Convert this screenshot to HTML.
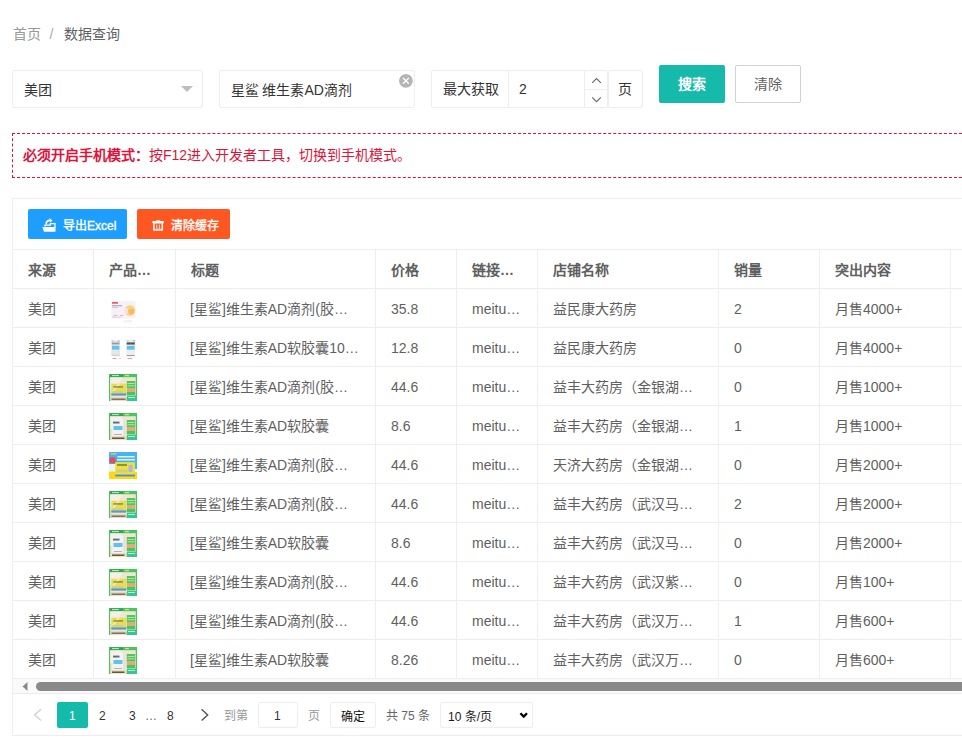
<!DOCTYPE html>
<html lang="zh-CN"><head><meta charset="utf-8">
<style>
*{box-sizing:border-box;margin:0;padding:0}
html,body{width:962px;height:737px;overflow:hidden;background:#fff}
body{font-family:"Liberation Sans",sans-serif;font-size:14px;color:#606266;position:relative}
.abs{position:absolute}
.bc{left:13px;top:24px;line-height:20px;font-size:14px}
.bc .a{color:#999}
.bc .s{color:#aaa;margin:0 10.5px 0 8.5px}
.bc .b{color:#606266}
.box{position:absolute;border:1px solid #eee;border-radius:2px;background:#fff}
.txt{position:absolute;line-height:20px;white-space:nowrap}
.btn{position:absolute;border-radius:2px;text-align:center;white-space:nowrap}
.alert{left:12px;top:133px;width:980px;height:45px;border:1px dashed #dc143c}
.alert span{position:absolute;left:10px;top:11px;line-height:20px;font-size:14px;color:#dc143c}
.card{left:12px;top:198px;width:990px;height:538px;border:1px solid #eee;background:#fff}
.tb{position:absolute;left:0;top:50px;border-collapse:collapse;table-layout:fixed}
.tb td,.tb th{border:1px solid #eee;height:39px;padding:0 15px;text-align:left;white-space:nowrap;overflow:hidden;font-size:14px;color:#5f5f5f}
.tb th{font-weight:bold;color:#5f5f5f}

.tb td{position:relative}
.tb td.n{padding-top:2px}
.tb td.t{text-indent:-1px}
.im{position:absolute;left:15px;top:7px;width:28px;height:28px;display:block}
.scr{position:absolute;left:0;top:480px;width:990px;height:15px;background:#fafafa;border-bottom:1px solid #ececec}
.pg{position:absolute;line-height:20px;font-size:12px;white-space:nowrap}
</style></head><body>
<div class="abs bc"><span class="a">首页</span><span class="s">/</span><span class="b">数据查询</span></div>

<!-- select -->
<div class="box" style="left:12px;top:70px;width:191px;height:38px"></div>
<div class="txt" style="left:23.5px;top:80px;color:#333">美团</div>
<svg class="abs" style="left:181px;top:86px" width="12" height="7"><path d="M0 0H12L6 6Z" fill="#bdbdbd"/></svg>

<!-- input -->
<div class="box" style="left:219px;top:70px;width:196px;height:38px"></div>
<div class="txt" style="left:230.5px;top:80px;color:#333">星鲨 维生素AD滴剂</div>
<svg class="abs" style="left:398px;top:73px" width="16" height="16"><circle cx="7.9" cy="7.85" r="6.9" fill="#b4b4b4"/><path d="M5 4.95L10.8 10.75M10.8 4.95L5 10.75" stroke="#fff" stroke-width="1.3"/></svg>

<!-- max -->
<div class="box" style="left:431px;top:70px;width:78px;height:38px;border-radius:2px 0 0 2px"></div>
<div class="txt" style="left:443px;top:79px;color:#333">最大获取</div>
<div class="box" style="left:508px;top:70px;width:100px;height:38px;border-radius:2px"></div>
<div class="txt" style="left:519px;top:79px;color:#333">2</div>
<div class="abs" style="left:584px;top:71px;width:1px;height:36px;background:#eee"></div>
<div class="abs" style="left:585px;top:89px;width:22px;height:1px;background:#eee"></div>
<svg class="abs" style="left:591px;top:77px" width="12" height="8" viewBox="0 0 12 8"><path d="M1.2 5.9L5.5 1.6L9.8 5.9" fill="none" stroke="#666" stroke-width="1.1"/></svg>
<svg class="abs" style="left:591px;top:96px" width="12" height="8" viewBox="0 0 12 8"><path d="M1.2 1.3L5.5 5.6L9.8 1.3" fill="none" stroke="#666" stroke-width="1.1"/></svg>
<div class="box" style="left:608px;top:70px;width:35px;height:38px;border-radius:2px"></div>
<div class="txt" style="left:618px;top:79px;color:#333">页</div>

<div class="btn" style="left:659px;top:65px;width:66px;height:38px;background:#16baaa;color:#fff;font-weight:bold;line-height:38px">搜索</div>
<div class="btn" style="left:735px;top:65px;width:66px;height:38px;border:1px solid #d2d2d2;color:#5f5f5f;line-height:36px">清除</div>

<div class="abs alert"><span><b>必须开启手机模式：</b>按F12进入开发者工具，切换到手机模式。</span></div>

<div class="abs card">
  <div class="btn" style="left:15px;top:10px;width:99px;height:30px;background:#1e9fff"></div>
  <svg class="abs" style="left:29px;top:18px" width="15" height="16" viewBox="0 0 15 16"><path d="M0.4 10 L13.6 10 L13.4 14.8 L2 14.8 Z" fill="#fff"/><path d="M3 9.5 V8.2 H8.3 V6.6 H13 V10" fill="none" stroke="#fff" stroke-width="1.3"/><path d="M4.2 7.2 C4.2 4.6 5.6 3.4 8 3.4" fill="none" stroke="#fff" stroke-width="1.6"/><path d="M7.4 0.9 L10.4 3.6 L8.4 5.8 Z" fill="#fff"/></svg>
  <div class="txt" style="left:50px;top:17px;color:#fff;font-size:12px;-webkit-text-stroke:0.35px #fff">导出Excel</div>
  <div class="btn" style="left:124px;top:10px;width:93px;height:30px;background:#ff5722"></div>
  <svg class="abs" style="left:139px;top:20.6px" width="13" height="12" viewBox="0 0 13 12"><rect x="0.2" y="1" width="11.8" height="2.4" rx="1.1" fill="#fff"/><rect x="4.2" y="0.2" width="4" height="1" fill="#ffd9c9"/><path d="M1.9 3 V10.1 H10.3 V3" fill="none" stroke="#fff" stroke-width="1.5"/><path d="M4.8 4.6 V8.6 M7.4 4.6 V8.6" stroke="#ffe2d6" stroke-width="1"/><path d="M3.2 8.9 H9" stroke="#ffd2bf" stroke-width="0.6"/></svg>
  <div class="txt" style="left:158px;top:17px;color:#fff;font-size:12px;-webkit-text-stroke:0.35px #fff">清除缓存</div>
  <table class="tb" style="left:-1px;width:1038px">
    <colgroup><col style="width:81px"><col style="width:82px"><col style="width:200px"><col style="width:81px"><col style="width:81px"><col style="width:181px"><col style="width:101px"><col style="width:131px"><col style="width:100px"></colgroup>
    <tr><th>来源</th><th>产品…</th><th>标题</th><th>价格</th><th>链接…</th><th>店铺名称</th><th>销量</th><th>突出内容</th><th></th></tr>
    <tr><td>美团</td><td><svg class="im" viewBox="0 0 28 28"><rect x="2.3" y="5" width="24.2" height="17.4" fill="#f5f1f7"/><rect x="3" y="6" width="6" height="1.7" fill="#ec5a6c"/><rect x="3" y="9.2" width="10" height="1.1" fill="#a89fb6"/><rect x="3" y="11.2" width="6" height="0.8" fill="#c9c1d2"/><circle cx="21" cy="14.5" r="5.2" fill="#f8d27c"/><circle cx="22.3" cy="15.6" r="2.8" fill="#f5bb6a"/><path d="M16 12 L19 12.5 L19 18 L15.5 17.5 Z" fill="#f3e3e0"/><rect x="4.5" y="19" width="4" height="0.8" fill="#eea0ae"/><rect x="11" y="19" width="3.5" height="0.8" fill="#eea0ae"/><rect x="3" y="20.8" width="9" height="0.6" fill="#c0bbc8"/><rect x="14.5" y="24" width="8.5" height="2.6" fill="#f4f4f4"/></svg></td><td class="t">[星鲨]维生素AD滴剂(胶…</td><td class="n">35.8</td><td class="n">meitu…</td><td>益民康大药房</td><td class="n">2</td><td>月售4000+</td><td></td></tr>
    <tr><td>美团</td><td><svg class="im" viewBox="0 0 28 28"><rect x="2.3" y="5.3" width="8.7" height="16" fill="#e6e6e6"/><rect x="2.6" y="5.6" width="2" height="1" fill="#8ccbe8"/><rect x="8.6" y="5.6" width="2" height="1" fill="#7bbfa5"/><rect x="2.8" y="7.6" width="7.7" height="1.8" fill="#9a9a9a"/><rect x="3" y="10.8" width="7.3" height="3.8" fill="#62c2ee"/><rect x="2.8" y="19.8" width="7.7" height="0.8" fill="#bfc8ce"/><rect x="17.3" y="5" width="8.9" height="16.6" fill="#eeeeee"/><rect x="17.6" y="5.3" width="2" height="1" fill="#8ccbe8"/><rect x="23.8" y="5.3" width="2" height="1" fill="#6cc59b"/><rect x="17.6" y="7.4" width="8.3" height="2.2" fill="#555"/><rect x="17.9" y="10.9" width="7.7" height="3.8" fill="#5cc3ef"/><rect x="17.8" y="20" width="7.9" height="0.8" fill="#888"/><rect x="3.5" y="23" width="4" height="0.8" fill="#f27f8d"/><rect x="10" y="23" width="2" height="0.7" fill="#f6b3bb"/><rect x="18.5" y="23" width="4.5" height="0.8" fill="#f27f8d"/></svg></td><td class="t">[星鲨]维生素AD软胶囊10…</td><td class="n">12.8</td><td class="n">meitu…</td><td>益民康大药房</td><td class="n">0</td><td>月售4000+</td><td></td></tr>
    <tr><td>美团</td><td><svg class="im" viewBox="0 0 28 28"><rect x="0" y="0" width="28" height="27" fill="#45c660"/><rect x="1.2" y="3.2" width="25.6" height="20.5" fill="#efe4d6"/><path d="M1.2 3.2 H14 L6 16 H1.2 Z" fill="#f6efe7"/><rect x="1.2" y="23.3" width="16.5" height="3.7" fill="#eadcc2"/><rect x="2.5" y="24.5" width="14" height="1.4" fill="#776850"/><rect x="2.3" y="9.8" width="14.9" height="11.8" rx="0.8" fill="#e4df50"/><path d="M2.3 18 L9 9.8 H11 L3.5 19 Z" fill="#f1eeb8"/><rect x="4.5" y="12.4" width="9.5" height="1.1" fill="#6e6c40"/><rect x="3" y="17" width="11" height="2" fill="#d2cf86"/><rect x="2.3" y="19.4" width="14.9" height="2.2" fill="#5a98dc"/><rect x="17.8" y="7" width="8.4" height="7.6" fill="#55c656"/><rect x="18.5" y="9" width="7" height="0.7" fill="#d4f1cc"/><rect x="18.5" y="11.5" width="7" height="0.7" fill="#d4f1cc"/><rect x="17.8" y="14.6" width="8.4" height="3.1" fill="#f4a07a"/><rect x="17.8" y="17.7" width="8.4" height="3.3" fill="#4ec454"/><rect x="18" y="21.5" width="9.5" height="5.5" fill="#36c693"/><rect x="19" y="23" width="7" height="0.8" fill="#dcf5ea"/><rect x="1" y="0.3" width="13" height="2.8" fill="#2aa84a"/><rect x="3" y="1.2" width="7" height="0.9" fill="#d8f1dc"/><rect x="16" y="1" width="4" height="1.2" fill="#dce36a"/></svg></td><td class="t">[星鲨]维生素AD滴剂(胶…</td><td class="n">44.6</td><td class="n">meitu…</td><td>益丰大药房（金银湖…</td><td class="n">0</td><td>月售1000+</td><td></td></tr>
    <tr><td>美团</td><td><svg class="im" viewBox="0 0 28 28"><rect x="0" y="0" width="28" height="27" fill="#45c660"/><rect x="1.2" y="3.2" width="25.6" height="20.5" fill="#efe4d6"/><path d="M1.2 3.2 H14 L6 16 H1.2 Z" fill="#f6efe7"/><rect x="1.2" y="23.3" width="16.5" height="3.7" fill="#f5e2b8"/><rect x="3" y="24.5" width="12.5" height="1.4" fill="#55493a"/><rect x="3.5" y="6" width="11" height="17" fill="#f2f3f5"/><rect x="14.5" y="7" width="1" height="16" fill="#dcdcdf"/><rect x="4" y="8.6" width="6.5" height="1.9" fill="#6a6a6a"/><rect x="4.5" y="13" width="9" height="4" fill="#62c2ef"/><rect x="5" y="21" width="8" height="0.7" fill="#999"/><rect x="17.8" y="7" width="8.4" height="7.6" fill="#55c656"/><rect x="18.5" y="9" width="7" height="0.7" fill="#d4f1cc"/><rect x="18.5" y="11.5" width="7" height="0.7" fill="#d4f1cc"/><rect x="17.8" y="14.6" width="8.4" height="3.1" fill="#f4a07a"/><rect x="17.8" y="17.7" width="8.4" height="3.3" fill="#4ec454"/><rect x="18" y="21.5" width="9.5" height="5.5" fill="#36c693"/><rect x="19" y="23" width="7" height="0.8" fill="#dcf5ea"/><rect x="1" y="0.3" width="13" height="2.8" fill="#2aa84a"/><rect x="3" y="1.2" width="7" height="0.9" fill="#d8f1dc"/><rect x="16" y="1" width="4" height="1.2" fill="#dce36a"/></svg></td><td class="t">[星鲨]维生素AD软胶囊</td><td class="n">8.6</td><td class="n">meitu…</td><td>益丰大药房（金银湖…</td><td class="n">1</td><td>月售1000+</td><td></td></tr>
    <tr><td>美团</td><td><svg class="im" viewBox="0 0 28 28"><rect x="0" y="0" width="28" height="19.5" fill="#48b4ee"/><rect x="0" y="19" width="28" height="8" fill="#fbd90a"/><path d="M0 12 H8 V19.5 H0 Z" fill="#eaf5fb"/><path d="M24 17 H28 V20 H24 Z" fill="#f2f7fb"/><rect x="1.5" y="1.2" width="6" height="1.2" fill="#f3c950"/><rect x="8.5" y="4" width="17" height="1.5" fill="#e4f2fb"/><rect x="8" y="7" width="18" height="1.5" fill="#e4f2fb"/><circle cx="3.6" cy="8.2" r="3.2" fill="#ec4a5a"/><rect x="6.2" y="10.2" width="19.8" height="14.2" fill="#e8e23e"/><rect x="8" y="12.4" width="10" height="1.2" fill="#5a5a3a"/><rect x="19.5" y="13" width="4" height="7" fill="#bbaedb"/><rect x="7.5" y="17.5" width="11" height="3" fill="#d4cc84"/><rect x="6.2" y="22.6" width="19.8" height="1.8" fill="#4a8ad4"/></svg></td><td class="t">[星鲨]维生素AD滴剂(胶…</td><td class="n">44.6</td><td class="n">meitu…</td><td>天济大药房（金银湖…</td><td class="n">0</td><td>月售2000+</td><td></td></tr>
    <tr><td>美团</td><td><svg class="im" viewBox="0 0 28 28"><rect x="0" y="0" width="28" height="27" fill="#45c660"/><rect x="1.2" y="3.2" width="25.6" height="20.5" fill="#efe4d6"/><path d="M1.2 3.2 H14 L6 16 H1.2 Z" fill="#f6efe7"/><rect x="1.2" y="23.3" width="16.5" height="3.7" fill="#eadcc2"/><rect x="2.5" y="24.5" width="14" height="1.4" fill="#776850"/><rect x="2.3" y="9.8" width="14.9" height="11.8" rx="0.8" fill="#e4df50"/><path d="M2.3 18 L9 9.8 H11 L3.5 19 Z" fill="#f1eeb8"/><rect x="4.5" y="12.4" width="9.5" height="1.1" fill="#6e6c40"/><rect x="3" y="17" width="11" height="2" fill="#d2cf86"/><rect x="2.3" y="19.4" width="14.9" height="2.2" fill="#5a98dc"/><rect x="17.8" y="7" width="8.4" height="7.6" fill="#55c656"/><rect x="18.5" y="9" width="7" height="0.7" fill="#d4f1cc"/><rect x="18.5" y="11.5" width="7" height="0.7" fill="#d4f1cc"/><rect x="17.8" y="14.6" width="8.4" height="3.1" fill="#f4a07a"/><rect x="17.8" y="17.7" width="8.4" height="3.3" fill="#4ec454"/><rect x="18" y="21.5" width="9.5" height="5.5" fill="#36c693"/><rect x="19" y="23" width="7" height="0.8" fill="#dcf5ea"/><rect x="1" y="0.3" width="13" height="2.8" fill="#2aa84a"/><rect x="3" y="1.2" width="7" height="0.9" fill="#d8f1dc"/><rect x="16" y="1" width="4" height="1.2" fill="#dce36a"/></svg></td><td class="t">[星鲨]维生素AD滴剂(胶…</td><td class="n">44.6</td><td class="n">meitu…</td><td>益丰大药房（武汉马…</td><td class="n">2</td><td>月售2000+</td><td></td></tr>
    <tr><td>美团</td><td><svg class="im" viewBox="0 0 28 28"><rect x="0" y="0" width="28" height="27" fill="#45c660"/><rect x="1.2" y="3.2" width="25.6" height="20.5" fill="#efe4d6"/><path d="M1.2 3.2 H14 L6 16 H1.2 Z" fill="#f6efe7"/><rect x="1.2" y="23.3" width="16.5" height="3.7" fill="#f5e2b8"/><rect x="3" y="24.5" width="12.5" height="1.4" fill="#55493a"/><rect x="3.5" y="6" width="11" height="17" fill="#f2f3f5"/><rect x="14.5" y="7" width="1" height="16" fill="#dcdcdf"/><rect x="4" y="8.6" width="6.5" height="1.9" fill="#6a6a6a"/><rect x="4.5" y="13" width="9" height="4" fill="#62c2ef"/><rect x="5" y="21" width="8" height="0.7" fill="#999"/><rect x="17.8" y="7" width="8.4" height="7.6" fill="#55c656"/><rect x="18.5" y="9" width="7" height="0.7" fill="#d4f1cc"/><rect x="18.5" y="11.5" width="7" height="0.7" fill="#d4f1cc"/><rect x="17.8" y="14.6" width="8.4" height="3.1" fill="#f4a07a"/><rect x="17.8" y="17.7" width="8.4" height="3.3" fill="#4ec454"/><rect x="18" y="21.5" width="9.5" height="5.5" fill="#36c693"/><rect x="19" y="23" width="7" height="0.8" fill="#dcf5ea"/><rect x="1" y="0.3" width="13" height="2.8" fill="#2aa84a"/><rect x="3" y="1.2" width="7" height="0.9" fill="#d8f1dc"/><rect x="16" y="1" width="4" height="1.2" fill="#dce36a"/></svg></td><td class="t">[星鲨]维生素AD软胶囊</td><td class="n">8.6</td><td class="n">meitu…</td><td>益丰大药房（武汉马…</td><td class="n">0</td><td>月售2000+</td><td></td></tr>
    <tr><td>美团</td><td><svg class="im" viewBox="0 0 28 28"><rect x="0" y="0" width="28" height="27" fill="#45c660"/><rect x="1.2" y="3.2" width="25.6" height="20.5" fill="#efe4d6"/><path d="M1.2 3.2 H14 L6 16 H1.2 Z" fill="#f6efe7"/><rect x="1.2" y="23.3" width="16.5" height="3.7" fill="#eadcc2"/><rect x="2.5" y="24.5" width="14" height="1.4" fill="#776850"/><rect x="2.3" y="9.8" width="14.9" height="11.8" rx="0.8" fill="#e4df50"/><path d="M2.3 18 L9 9.8 H11 L3.5 19 Z" fill="#f1eeb8"/><rect x="4.5" y="12.4" width="9.5" height="1.1" fill="#6e6c40"/><rect x="3" y="17" width="11" height="2" fill="#d2cf86"/><rect x="2.3" y="19.4" width="14.9" height="2.2" fill="#5a98dc"/><rect x="17.8" y="7" width="8.4" height="7.6" fill="#55c656"/><rect x="18.5" y="9" width="7" height="0.7" fill="#d4f1cc"/><rect x="18.5" y="11.5" width="7" height="0.7" fill="#d4f1cc"/><rect x="17.8" y="14.6" width="8.4" height="3.1" fill="#f4a07a"/><rect x="17.8" y="17.7" width="8.4" height="3.3" fill="#4ec454"/><rect x="18" y="21.5" width="9.5" height="5.5" fill="#36c693"/><rect x="19" y="23" width="7" height="0.8" fill="#dcf5ea"/><rect x="1" y="0.3" width="13" height="2.8" fill="#2aa84a"/><rect x="3" y="1.2" width="7" height="0.9" fill="#d8f1dc"/><rect x="16" y="1" width="4" height="1.2" fill="#dce36a"/></svg></td><td class="t">[星鲨]维生素AD滴剂(胶…</td><td class="n">44.6</td><td class="n">meitu…</td><td>益丰大药房（武汉紫…</td><td class="n">0</td><td>月售100+</td><td></td></tr>
    <tr><td>美团</td><td><svg class="im" viewBox="0 0 28 28"><rect x="0" y="0" width="28" height="27" fill="#45c660"/><rect x="1.2" y="3.2" width="25.6" height="20.5" fill="#efe4d6"/><path d="M1.2 3.2 H14 L6 16 H1.2 Z" fill="#f6efe7"/><rect x="1.2" y="23.3" width="16.5" height="3.7" fill="#eadcc2"/><rect x="2.5" y="24.5" width="14" height="1.4" fill="#776850"/><rect x="2.3" y="9.8" width="14.9" height="11.8" rx="0.8" fill="#e4df50"/><path d="M2.3 18 L9 9.8 H11 L3.5 19 Z" fill="#f1eeb8"/><rect x="4.5" y="12.4" width="9.5" height="1.1" fill="#6e6c40"/><rect x="3" y="17" width="11" height="2" fill="#d2cf86"/><rect x="2.3" y="19.4" width="14.9" height="2.2" fill="#5a98dc"/><rect x="17.8" y="7" width="8.4" height="7.6" fill="#55c656"/><rect x="18.5" y="9" width="7" height="0.7" fill="#d4f1cc"/><rect x="18.5" y="11.5" width="7" height="0.7" fill="#d4f1cc"/><rect x="17.8" y="14.6" width="8.4" height="3.1" fill="#f4a07a"/><rect x="17.8" y="17.7" width="8.4" height="3.3" fill="#4ec454"/><rect x="18" y="21.5" width="9.5" height="5.5" fill="#36c693"/><rect x="19" y="23" width="7" height="0.8" fill="#dcf5ea"/><rect x="1" y="0.3" width="13" height="2.8" fill="#2aa84a"/><rect x="3" y="1.2" width="7" height="0.9" fill="#d8f1dc"/><rect x="16" y="1" width="4" height="1.2" fill="#dce36a"/></svg></td><td class="t">[星鲨]维生素AD滴剂(胶…</td><td class="n">44.6</td><td class="n">meitu…</td><td>益丰大药房（武汉万…</td><td class="n">1</td><td>月售600+</td><td></td></tr>
    <tr><td>美团</td><td><svg class="im" viewBox="0 0 28 28"><rect x="0" y="0" width="28" height="27" fill="#45c660"/><rect x="1.2" y="3.2" width="25.6" height="20.5" fill="#efe4d6"/><path d="M1.2 3.2 H14 L6 16 H1.2 Z" fill="#f6efe7"/><rect x="1.2" y="23.3" width="16.5" height="3.7" fill="#f5e2b8"/><rect x="3" y="24.5" width="12.5" height="1.4" fill="#55493a"/><rect x="3.5" y="6" width="11" height="17" fill="#f2f3f5"/><rect x="14.5" y="7" width="1" height="16" fill="#dcdcdf"/><rect x="4" y="8.6" width="6.5" height="1.9" fill="#6a6a6a"/><rect x="4.5" y="13" width="9" height="4" fill="#62c2ef"/><rect x="5" y="21" width="8" height="0.7" fill="#999"/><rect x="17.8" y="7" width="8.4" height="7.6" fill="#55c656"/><rect x="18.5" y="9" width="7" height="0.7" fill="#d4f1cc"/><rect x="18.5" y="11.5" width="7" height="0.7" fill="#d4f1cc"/><rect x="17.8" y="14.6" width="8.4" height="3.1" fill="#f4a07a"/><rect x="17.8" y="17.7" width="8.4" height="3.3" fill="#4ec454"/><rect x="18" y="21.5" width="9.5" height="5.5" fill="#36c693"/><rect x="19" y="23" width="7" height="0.8" fill="#dcf5ea"/><rect x="1" y="0.3" width="13" height="2.8" fill="#2aa84a"/><rect x="3" y="1.2" width="7" height="0.9" fill="#d8f1dc"/><rect x="16" y="1" width="4" height="1.2" fill="#dce36a"/></svg></td><td class="t">[星鲨]维生素AD软胶囊</td><td class="n">8.26</td><td class="n">meitu…</td><td>益丰大药房（武汉万…</td><td class="n">0</td><td>月售600+</td><td></td></tr>
  </table>

  <div class="scr"></div>
  <svg class="abs" style="left:9px;top:483px" width="6" height="10"><path d="M5.5 0V9L0.5 4.5Z" fill="#8a8a8a"/></svg>
  <div class="abs" style="left:23px;top:483px;width:1000px;height:9px;border-radius:4.5px;background:#8a8a8a"></div>
  <svg class="abs" style="left:21px;top:510px" width="10" height="14"><path d="M7 0.2L0.6 5.9L7 11.6" fill="none" stroke="#d2d2d2" stroke-width="1.4"/></svg>
  <div class="abs" style="left:44px;top:503px;width:31px;height:26px;border-radius:2px;background:#16baaa"></div>
  <div class="pg" style="left:56px;top:507px;color:#fff">1</div>
  <div class="pg" style="left:86px;top:507px;color:#333">2</div>
  <div class="pg" style="left:116px;top:507px;color:#333">3</div>
  <div class="pg" style="left:132px;top:507px;color:#666">…</div>
  <div class="pg" style="left:154px;top:507px;color:#333">8</div>
  <svg class="abs" style="left:187px;top:510px" width="10" height="14"><path d="M1.6 0.2L7.7 5.9L1.6 11.6" fill="none" stroke="#555" stroke-width="1.4"/></svg>
  <div class="pg" style="left:211px;top:507px;color:#999">到第</div>
  <div class="abs" style="left:245px;top:503px;width:40px;height:26px;border:1px solid #eee;border-radius:2px"></div>
  <div class="pg" style="left:261px;top:507px;color:#333">1</div>
  <div class="pg" style="left:295px;top:507px;color:#999">页</div>
  <div class="abs" style="left:317px;top:503px;width:46px;height:26px;border:1px solid #eee;border-radius:2px"></div>
  <div class="pg" style="left:328px;top:508px;color:#111">确定</div>
  <div class="pg" style="left:373px;top:507px;color:#666">共 75 条</div>
  <div class="abs" style="left:427px;top:503px;width:93px;height:26px;border:1px solid #eee;border-radius:2px"></div>
  <div class="pg" style="left:435px;top:507.5px;color:#1a1a1a">10 条/页</div>
  <svg class="abs" style="left:506px;top:512px" width="10" height="8"><path d="M1.4 2.2L4.7 5.5L8 2.2" fill="none" stroke="#000" stroke-width="2.3"/></svg>
</div>
</body></html>
